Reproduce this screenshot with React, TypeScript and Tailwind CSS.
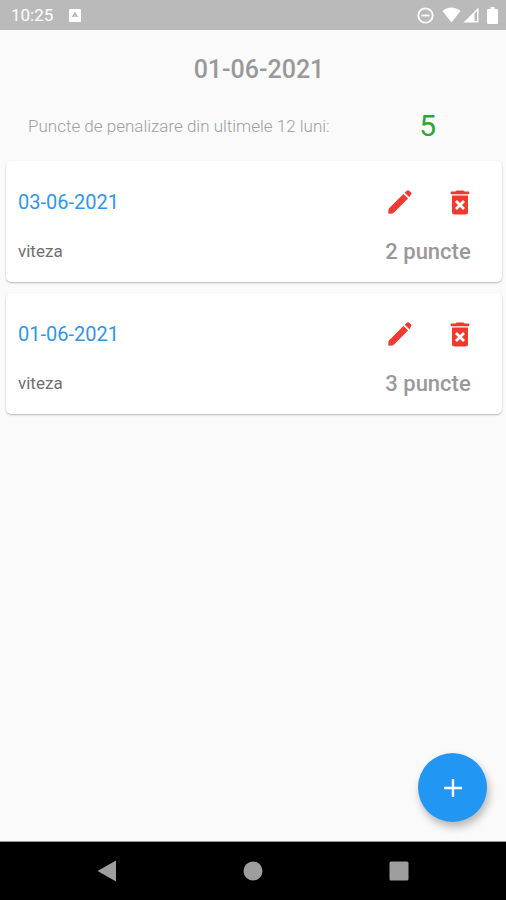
import React from "react";

type Penalty = { date: string; reason: string; points: number };

const penalties: Penalty[] = [
  { date: "03-06-2021", reason: "viteza", points: 2 },
  { date: "01-06-2021", reason: "viteza", points: 3 },
];

function StatusBar() {
  return (
    <div className="flex h-[30px] shrink-0 items-center justify-between bg-[#bababa] pr-2 pl-[11px] text-white">
      <div className="flex items-center gap-4">
        <span className="text-[17px] leading-5">10:25</span>
        <svg viewBox="0 0 12 13" className="h-[13px] w-3" aria-hidden="true">
          <rect width="12" height="13" rx="1" fill="currentColor" />
          <path d="M3.5 8 6 4l2.500 4M4.500 7h3" fill="none" stroke="#aaaaaa" strokeWidth="1.2" />
        </svg>
      </div>
      <div className="flex items-center">
        <svg viewBox="0 0 17 17" className="mr-2 size-[17px]" fill="none" stroke="currentColor" strokeWidth="1.8" aria-hidden="true">
          <circle cx="8.5" cy="8.5" r="7.2" />
          <path d="M4.500 8.5h8" />
        </svg>
        <svg viewBox="0 0 19 16" className="mr-0.5 h-4 w-[19px]" fill="currentColor" aria-hidden="true">
          <path d="M9.5 15.5.5 4Q4.500.5 9.500.5T18.500 4Z" />
        </svg>
        <svg viewBox="0 0 16 16" className="mr-2 size-4" aria-hidden="true">
          <path d="M15.500.500V15.500H.500Z" fill="currentColor" />
          <path d="M11.500 6.500 14 4V14H11.500Z" fill="#bababa" />
        </svg>
        <svg viewBox="0 0 11 17" className="h-[17px] w-[11px]" fill="currentColor" aria-hidden="true">
          <path d="M3.500 0h4v2H10q1 0 1 1v13q0 1-1 1H1q-1 0-1-1V3q0-1 1-1h2.500Z" />
        </svg>
      </div>
    </div>
  );
}

function PencilIcon() {
  return (
    <svg viewBox="0 0 24 24" className="size-6" fill="currentColor" aria-hidden="true">
      <path d="M15.400 4 20 8.600 6 22.600q-.7.700-1.600.8l-2.600.4Q.1 24 .2 22.200L.600 19.600q.1-.9.800-1.600Z" />
      <path d="M16.700 2.700 18.500.9q1.500-1.400 3 0l1.200 1.200q1.400 1.500 0 3L21.300 7.300Z" />
    </svg>
  );
}

function TrashIcon() {
  return (
    <svg viewBox="0 0 20 25" className="h-[25px] w-5" aria-hidden="true">
      <path d="M7 .5h6q1 0 1.500 1h4q.8 0 .8.800v1.200q0 .8-.8.800h-17q-.8 0-.8-.8V2.300q0-.8.800-.8h4Q6 .5 7 .5Z" fill="currentColor" />
      <path d="M2 5.500h16V22q0 2.500-2.500 2.500h-11Q2 24.500 2 22Z" fill="currentColor" />
      <path d="m6 11 8 8m0-8-8 8" stroke="white" strokeWidth="2.800" />
    </svg>
  );
}

function PenaltyCard({ date, reason, points }: Penalty) {
  return (
    <li className="flex justify-between rounded-[5px] bg-white pt-[23px] pr-4 pb-[18px] pl-3 shadow-[0_1px_2px_rgba(0,0,0,0.28)]">
      <div className="flex flex-col gap-[19px]">
        <h2 className="text-[20px] leading-9 text-[#2f96ee]">{date}</h2>
        <p className="text-[17px] leading-6 text-[#707070]">{reason}</p>
      </div>
      <div className="flex flex-col items-center gap-5">
        <div className="flex gap-6 pl-1">
          <button type="button" aria-label="Editează" className="flex size-9 items-center justify-center text-[#f13a2f]">
            <PencilIcon />
          </button>
          <button type="button" aria-label="Șterge" className="flex size-9 items-center justify-center text-[#f13a2f]">
            <TrashIcon />
          </button>
        </div>
        <p className="w-[116px] text-center text-[22px] leading-6 font-medium text-[#999999]">{points} puncte</p>
      </div>
    </li>
  );
}

export default function App() {
  return (
    <div className="flex min-h-screen flex-col bg-[#fafafa] font-[Roboto,sans-serif]">
      <StatusBar />
      <main className="flex grow flex-col">
        <h1 className="pt-6 pl-3 text-center text-[25px] leading-8 font-medium text-[#999999]">01-06-2021</h1>
        <div className="flex items-center justify-between pt-5 pr-[70px] pb-[15px] pl-7">
          <p className="text-[17px] leading-6 font-light text-[#a0a0a0]">Puncte de penalizare din ultimele 12 luni:</p>
          <p className="text-[30px] leading-10 text-[#2fa534]">5</p>
        </div>
        <ul className="flex flex-col gap-[11px] pr-1 pl-1.5">
          {penalties.map((p) => (
            <PenaltyCard key={p.date} {...p} />
          ))}
        </ul>
        <div className="mt-auto flex justify-end pr-[19px] pb-[19px]">
          <button
            type="button"
            aria-label="Adaugă"
            className="flex size-[69px] items-center justify-center rounded-full bg-[#2196f3] text-white shadow-[2px_5px_8px_rgba(0,0,0,0.28)]"
          >
            <svg viewBox="0 0 18 18" className="size-[18px]" stroke="currentColor" strokeWidth="2.400" aria-hidden="true">
              <path d="M9 0v18M0 9h18" />
            </svg>
          </button>
        </div>
      </main>
      <nav className="flex h-[59px] shrink-0 items-center justify-center gap-[126px] border-t border-[#999999] bg-black text-[#9e9e9e]">
        <button type="button" aria-label="Înapoi">
          <svg viewBox="0 0 20 22" className="h-[22px] w-5" fill="currentColor">
            <path d="M19 .5v21L.5 11Z" />
          </svg>
        </button>
        <button type="button" aria-label="Acasă">
          <svg viewBox="0 0 20 20" className="size-5" fill="currentColor">
            <circle cx="10" cy="10" r="9.500" />
          </svg>
        </button>
        <button type="button" aria-label="Recente">
          <svg viewBox="0 0 20 20" className="size-5" fill="currentColor">
            <rect x=".5" y=".5" width="19" height="19" rx="1.500" />
          </svg>
        </button>
      </nav>
    </div>
  );
}
